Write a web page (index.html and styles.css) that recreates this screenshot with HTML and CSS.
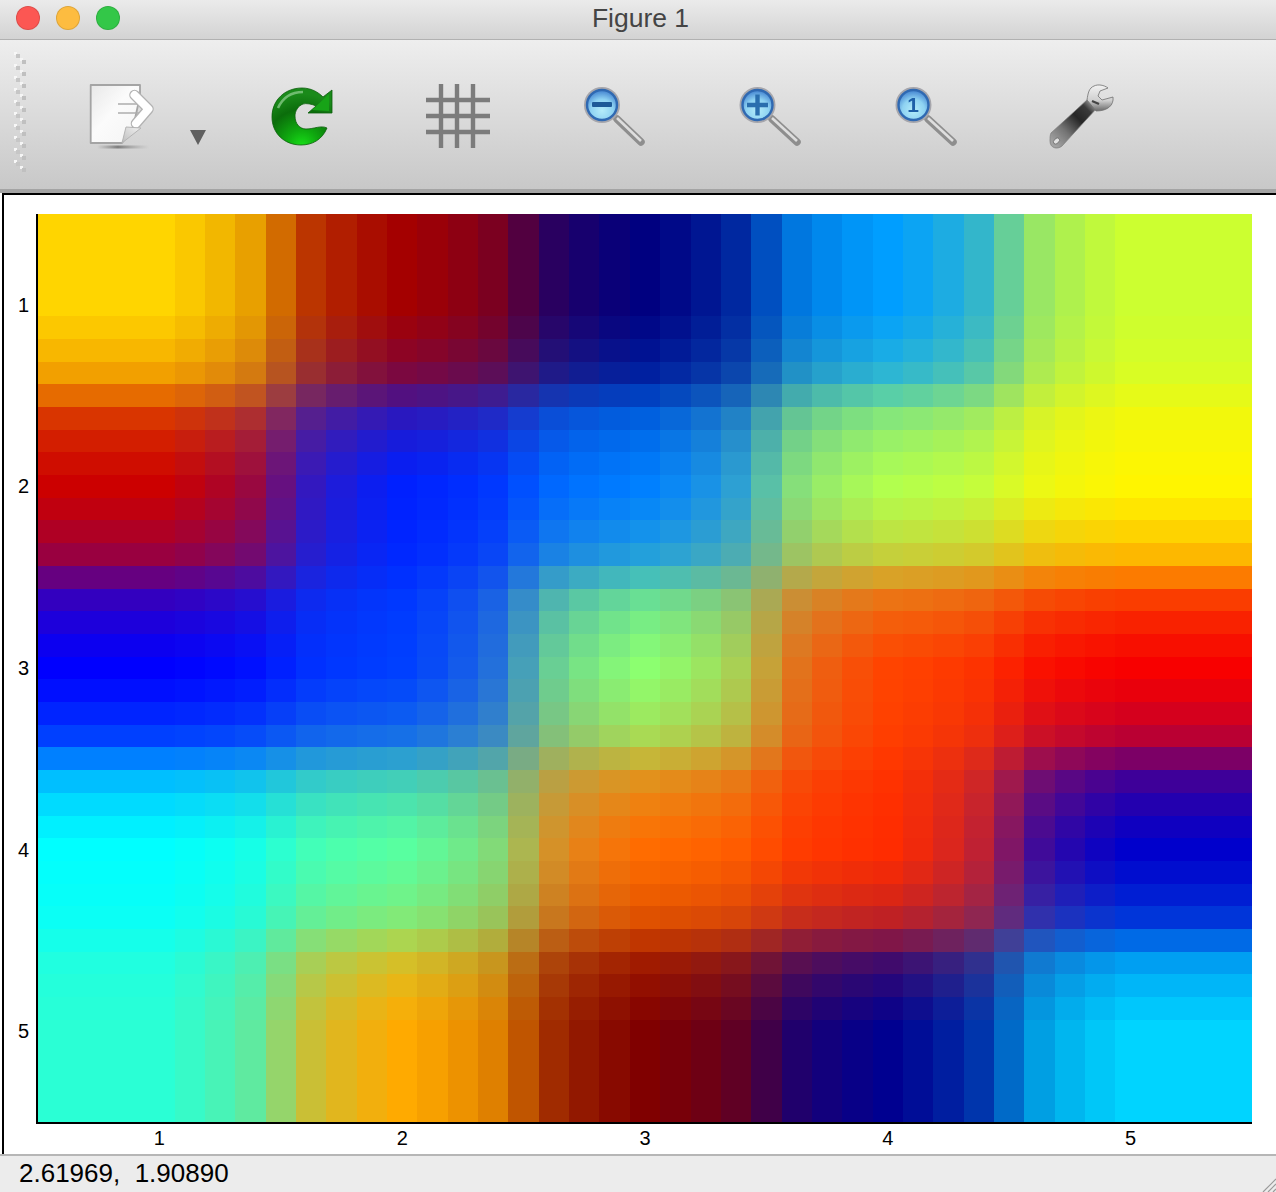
FILE: index.html
```html
<!DOCTYPE html>
<html lang="en">
<head>
<meta charset="utf-8">
<title>Figure 1</title>
<link rel="stylesheet" href="styles.css">
</head>
<body>
<div class="window">
  <header class="titlebar">
    <div class="lights">
      <span class="light light-red"></span>
      <span class="light light-yellow"></span>
      <span class="light light-green"></span>
    </div>
    <div class="title">Figure 1</div>
  </header>

  <div class="toolbar">
    <svg class="handle" width="12" height="120" viewBox="0 0 12 120">
      <defs>
        <pattern id="grip" width="12" height="12" patternUnits="userSpaceOnUse">
          <rect x="0" y="0" width="3" height="3" fill="#f7f7f7"/>
          <rect x="6" y="6" width="3" height="3" fill="#f5f5f5"/>
          <rect x="2" y="2" width="4" height="4" fill="#c6c6c6"/>
          <rect x="8" y="8" width="4" height="4" fill="#c0c0c0"/>
        </pattern>
      </defs>
      <rect width="12" height="120" fill="url(#grip)"/>
    </svg>

    <div class="tool tool-doc">
      <svg class="icon" width="68" height="68" viewBox="88 82 68 68">
        <defs>
          <linearGradient id="paper" x1="0" y1="0" x2="1" y2="1">
            <stop offset="0" stop-color="#e8e8e8"/>
            <stop offset=".45" stop-color="#fbfbfb"/>
            <stop offset="1" stop-color="#f4f4f4"/>
          </linearGradient>
          <linearGradient id="docshadow" x1="0" y1="0" x2="1" y2="0">
            <stop offset="0" stop-color="#8a8a8a" stop-opacity="0"/>
            <stop offset=".4" stop-color="#7e7e7e"/>
            <stop offset="1" stop-color="#a0a0a0" stop-opacity="0"/>
          </linearGradient>
          <linearGradient id="fold" x1="0" y1="1" x2="1" y2="0">
            <stop offset="0" stop-color="#bdbdbd"/>
            <stop offset="1" stop-color="#f2f2f2"/>
          </linearGradient>
        </defs>
        <rect x="97" y="145.5" width="52" height="3" fill="url(#docshadow)"/>
        <path d="M90.7 85H140V96L133 128L122 143H90.7Z" fill="url(#paper)" stroke="#a4a4a4" stroke-width="1.8" stroke-linejoin="round"/>
        <path d="M118 104H142M118 113H141" stroke="#adadad" stroke-width="1.6" fill="none"/>
        <path d="M134.5 95L148.5 109L136 123.5" fill="none" stroke="#b2b2b2" stroke-width="10.5" stroke-linecap="round" stroke-linejoin="round"/>
        <path d="M134.5 95L148.5 109L136 123.5" fill="none" stroke="#ffffff" stroke-width="8" stroke-linecap="round" stroke-linejoin="round"/>
        <path d="M126 127L141 128L122 143Z" fill="url(#fold)" stroke="#b4b4b4" stroke-width="1" stroke-linejoin="round"/>
      </svg>
      <svg class="menu-arrow" width="16" height="15" viewBox="0 0 16 15"><path d="M0 0H16L8 15Z" fill="#606060"/></svg>
    </div>

    <div class="tool">
      <svg class="icon" width="68" height="68" viewBox="268 82 68 68">
        <defs>
          <radialGradient id="green" gradientUnits="userSpaceOnUse" cx="302" cy="146" r="52">
            <stop offset="0" stop-color="#18e018"/>
            <stop offset=".32" stop-color="#0fa80f"/>
            <stop offset=".7" stop-color="#0b6d0b"/>
            <stop offset="1" stop-color="#1a8a1a"/>
          </radialGradient>
        </defs>
        <path d="M327 128C322 140 312 145 301 145C284 145 272 133 272 117C272 100 285 88 302 88C311 88 318 92 323 97L332 90V113H308L316 106C312 104 306 103 303 104C298 106 295 111 295 116C295 124 300 129 306 129C314 129 321 125 327 128Z" fill="url(#green)" stroke="#0a5e0a" stroke-width=".8"/>
        <path d="M278 108C283 97 292 92 303 92" stroke="#8ccc8c" stroke-width="2.6" fill="none" opacity=".75"/>
        <path d="M312 110L329 94V111Z" fill="#17a317"/>
      </svg>
    </div>

    <div class="tool">
      <svg class="icon" width="68" height="68" viewBox="424 82 68 68">
        <path d="M441 84V148M457 84V148M473 84V148M426 100H490M426 116H490M426 132H490" stroke="#7c7c7c" stroke-width="4.4" fill="none"/>
      </svg>
    </div>

    <div class="tool">
      <svg class="icon" width="68" height="68" viewBox="580 82 68 68">
        <defs>
          <radialGradient id="lens" cx=".5" cy=".68" r=".62">
            <stop offset="0" stop-color="#b4ecfa"/>
            <stop offset=".6" stop-color="#8ed2f2"/>
            <stop offset="1" stop-color="#4f90d6"/>
          </radialGradient>
        </defs>
        <path d="M617 119L641 142" stroke="#8e8e8e" stroke-width="7.5" stroke-linecap="round"/>
        <path d="M617 118L641 141" stroke="#dedede" stroke-width="2.6"/>
        <circle cx="602" cy="105" r="18" fill="#a6a6ac"/>
        <circle cx="602" cy="105" r="15" fill="url(#lens)" stroke="#2f69b2" stroke-width="2.4"/>
        <rect x="592" y="102" width="20" height="5" rx="1" fill="#1e5a98"/>
      </svg>
    </div>

    <div class="tool">
      <svg class="icon" width="68" height="68" viewBox="736 82 68 68">
        <path d="M772 119L797 142" stroke="#8e8e8e" stroke-width="7.5" stroke-linecap="round"/>
        <path d="M772 118L797 141" stroke="#dedede" stroke-width="2.6"/>
        <circle cx="757.5" cy="105" r="18" fill="#a6a6ac"/>
        <circle cx="757.5" cy="105" r="15" fill="url(#lens)" stroke="#2f69b2" stroke-width="2.4"/>
        <path d="M747 105H768M757.5 94.5V115.5" stroke="#2a6eae" stroke-width="4.4"/>
      </svg>
    </div>

    <div class="tool">
      <svg class="icon" width="68" height="68" viewBox="892 82 68 68">
        <path d="M928 119L953 142" stroke="#8e8e8e" stroke-width="7.5" stroke-linecap="round"/>
        <path d="M928 118L953 141" stroke="#dedede" stroke-width="2.6"/>
        <circle cx="913.5" cy="105" r="18" fill="#a6a6ac"/>
        <circle cx="913.5" cy="105" r="15" fill="url(#lens)" stroke="#2f69b2" stroke-width="2.4"/>
        <text class="lens-digit" x="913" y="112" text-anchor="middle">1</text>
      </svg>
    </div>

    <div class="tool">
      <svg class="icon" width="68" height="68" viewBox="1048 82 68 68">
        <defs>
          <linearGradient id="steel" gradientUnits="userSpaceOnUse" x1="1054" y1="144" x2="1094" y2="104">
            <stop offset="0" stop-color="#a2a2a2"/>
            <stop offset=".3" stop-color="#747474"/>
            <stop offset=".62" stop-color="#262626"/>
            <stop offset=".85" stop-color="#3a3a3a"/>
            <stop offset="1" stop-color="#9a9a9a"/>
          </linearGradient>
          <linearGradient id="head" x1="0" y1="0" x2="0" y2="1">
            <stop offset="0" stop-color="#f2f2f2"/>
            <stop offset=".6" stop-color="#cfcfcf"/>
            <stop offset="1" stop-color="#6a6a6a"/>
          </linearGradient>
        </defs>
        <path d="M1051 133L1088 99L1097 108L1062 146C1057 150 1050 148 1050 141C1050 138 1050 135 1051 133Z" fill="url(#steel)" stroke="#7a7a7a" stroke-width=".7"/>
        <ellipse cx="1056.5" cy="141" rx="3.6" ry="2.4" fill="#e2e2e2" stroke="#666" stroke-width=".8" transform="rotate(-45 1056.5 141)"/>
        <path d="M1087 100C1088 93 1089 88 1094 86C1098 84 1104 85 1108 88L1100 91L1098 96L1102 100L1113 97C1114 105 1108 111 1096 111Z" fill="url(#head)" stroke="#707070" stroke-width=".8" stroke-linejoin="round"/>
        <path d="M1092 101L1099 104" stroke="#444" stroke-width="2.2"/>
      </svg>
    </div>
  </div>

  <main class="figure">
    <div class="y-axis">
      <span class="tick">1</span><span class="tick">2</span><span class="tick">3</span><span class="tick">4</span><span class="tick">5</span>
    </div>
    <div class="axes"><canvas id="heatmap" width="1214" height="908"></canvas></div>
    <div class="x-axis">
      <span class="tick">1</span><span class="tick">2</span><span class="tick">3</span><span class="tick">4</span><span class="tick">5</span>
    </div>
  </main>

  <footer class="statusbar">
    <span class="coords">2.61969,  1.90890</span>
    <svg class="grip" width="14" height="14" viewBox="0 0 14 14">
      <path d="M14 1L1 14M14 6L6 14M14 11L11 14" stroke="#9a9a9a" stroke-width="1.2" fill="none"/>
    </svg>
  </footer>
</div>
<script src="app.js"></script>
</body>
</html>
```

FILE: styles.css
```css
* { box-sizing: border-box; }

html, body {
  margin: 0;
  height: 100%;
  background: #fff;
  overflow: hidden;
}

.window {
  width: 1276px;
  height: 1192px;
  display: flex;
  flex-direction: column;
  font-family: "Liberation Sans", Arial, sans-serif;
}

.titlebar {
  flex: 0 0 40px;
  display: grid;
  grid-template-columns: 1fr auto 1fr;
  align-items: center;
  padding-bottom: 3px;
  background: linear-gradient(#ebebeb, #d3d3d3);
  border-bottom: 1px solid #b1b1b1;
}

.lights {
  display: flex;
  gap: 16px;
  padding-left: 16px;
}

.light {
  width: 24px;
  height: 24px;
  border-radius: 50%;
  border: 1px solid rgba(0, 0, 0, .12);
}

.light-red { background: #fc5753; }
.light-yellow { background: #fdbc40; }
.light-green { background: #33c748; }

.title {
  font-size: 26.5px;
  line-height: 36px;
  padding-left: 5px;
  color: #444;
}

.toolbar {
  flex: 0 0 153px;
  display: flex;
  align-items: flex-start;
  padding: 12px 0 0 14px;
  background: linear-gradient(#eeeeee, #c8c8c8);
  border-bottom: 4px solid #a4a4a4;
}

.handle { flex: none; }

.tool {
  flex: none;
  width: 156px;
  padding-top: 30px;
  display: flex;
  justify-content: center;
}

.tool-doc {
  width: 198px;
  justify-content: flex-start;
  padding-left: 62px;
}

.icon {
  display: block;
  flex: none;
  filter: blur(.45px);
}

.menu-arrow {
  flex: none;
  margin: 48px 0 0 34px;
}

.lens-digit {
  font-family: "Liberation Sans", Arial, sans-serif;
  font-size: 21px;
  font-weight: 700;
  fill: #1d5fa8;
}

.figure {
  flex: 1;
  margin-left: 2px;
  border-left: 2px solid #000;
  border-top: 2px solid #000;
  padding-top: 19px;
  display: grid;
  grid-template-columns: 32px 1216px;
  grid-template-rows: 910px auto;
  background: #fff;
}

.y-axis {
  height: 908px;
  display: grid;
  grid-template-rows: repeat(5, 1fr);
  justify-items: end;
  align-items: center;
  padding-right: 7px;
}

.axes {
  border-left: 2px solid #000;
  border-bottom: 2px solid #000;
}

.axes canvas { display: block; }

.x-axis {
  grid-column: 2;
  padding: 2px 0 0 2px;
  display: grid;
  grid-template-columns: repeat(5, 1fr);
  justify-items: center;
}

.tick {
  font-size: 20px;
  line-height: 24px;
  color: #000;
}

.statusbar {
  flex: 0 0 38px;
  display: flex;
  justify-content: space-between;
  align-items: flex-end;
  background: #ececec;
  border-top: 2px solid #b6b6b6;
}

.coords {
  font-size: 26px;
  line-height: 34px;
  padding: 0 0 2px 19px;
  white-space: pre;
  color: #000;
}

.grip { display: block; flex: none; }
```

FILE: app.js
```js
var anchors = [
  ["#ffd500", "#a40000", "#000080", "#009eff", "#ccff30"],
  ["#cc0000", "#0020ff", "#0080ff", "#b2ff4e", "#fff500"],
  ["#0000ff", "#0040ff", "#8cff70", "#ff4400", "#f80000"],
  ["#00ffff", "#58ffa0", "#ff6c00", "#ff2c00", "#0000cc"],
  ["#2affd5", "#ffaa00", "#800000", "#000090", "#00d4ff"]
];
var blend = [0, 0.06, 0.14, 0.25, 0.5, 0.75, 0.86, 0.94];

function rgb(hex) {
  return [1, 3, 5].map(function (i) { return parseInt(hex.substr(i, 2), 16); });
}
var colors = anchors.map(function (row) { return row.map(rgb); });

function locate(k) {
  var s = Math.min(Math.max(k - 4, 0), 32);
  var i = Math.min(Math.floor(s / 8), 3);
  var rest = s - i * 8;
  return [i, rest === 8 ? 1 : blend[rest]];
}

var canvas = document.getElementById("heatmap");
var ctx = canvas.getContext("2d");
var cw = canvas.width / 40, ch = canvas.height / 40;

function edge(k, size, max) {
  return Math.max(0, Math.min(max, Math.round((k - 0.5) * size)));
}

for (var r = 0; r <= 40; r++) {
  var a = locate(r);
  var y0 = edge(r, ch, canvas.height), y1 = edge(r + 1, ch, canvas.height);
  for (var c = 0; c <= 40; c++) {
    var b = locate(c);
    var x0 = edge(c, cw, canvas.width), x1 = edge(c + 1, cw, canvas.width);
    var out = [0, 1, 2].map(function (n) {
      var top = colors[a[0]][b[0]][n] * (1 - b[1]) + colors[a[0]][b[0] + 1][n] * b[1];
      var bot = colors[a[0] + 1][b[0]][n] * (1 - b[1]) + colors[a[0] + 1][b[0] + 1][n] * b[1];
      return Math.round(top * (1 - a[1]) + bot * a[1]);
    });
    ctx.fillStyle = "rgb(" + out.join(",") + ")";
    ctx.fillRect(x0, y0, x1 - x0, y1 - y0);
  }
}
```
